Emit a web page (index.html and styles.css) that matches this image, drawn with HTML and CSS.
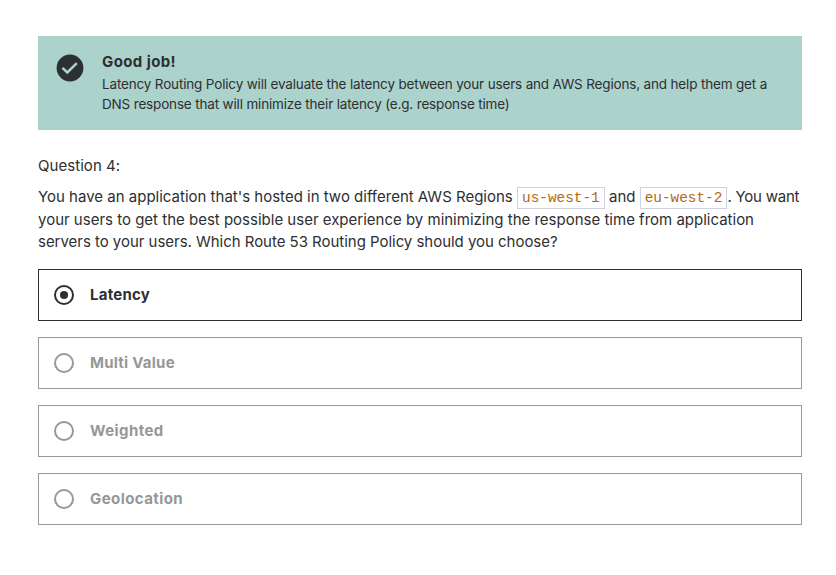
FILE: index.html
```html
<!DOCTYPE html>
<html lang="en">
<head>
<meta charset="utf-8">
<title>Quiz</title>
<link rel="stylesheet" href="styles.css">
</head>
<body>
<main class="quiz">
  <section class="alert">
    <svg class="alert-icon" viewBox="0 0 28 28"><circle cx="14" cy="14" r="13.4" fill="#2d2f31"/><path d="M6.5 13.8l4.8 4.7 9.5-9.3" fill="none" stroke="#acd2cc" stroke-width="2.5"/></svg>
    <div class="alert-body">
      <h2>Good job!</h2>
      <p>Latency Routing Policy will evaluate the latency between your users and AWS Regions, and help them get a<br>DNS response that will minimize their latency (e.g. response time)</p>
    </div>
  </section>
  <p class="number">Question 4:</p>
  <p class="question">You have an application that's hosted in two different AWS Regions <code>us-west-1</code> and <code>eu-west-2</code><span class="tail">. You want</span><br>your users to get the best possible user experience by minimizing the response time from application<br><span class="last">servers to your users. Which Route 53 Routing Policy should you choose?</span></p>
  <ul class="answers">
    <li class="answer selected"><i class="radio"></i><span class="label">Latency</span></li>
    <li class="answer"><i class="radio"></i><span class="label">Multi Value</span></li>
    <li class="answer"><i class="radio"></i><span class="label wide">Weighted</span></li>
    <li class="answer"><i class="radio"></i><span class="label wide">Geolocation</span></li>
  </ul>
</main>
</body>
</html>
```
FILE: styles.css
```css
* { box-sizing: border-box; }
body { margin: 0; background: #fff; color: #2d2f31; font-family: Inter, "Liberation Sans", sans-serif; }
h2, p, ul { margin: 0; padding: 0; }
.quiz { padding: 36px 34px 0 38px; }
.alert { display: flex; height: 94px; background: #acd2cc; padding: 16px 18px; }
.alert-icon { width: 28px; height: 28px; margin: 2px 18px 0 0; flex: none; }
.alert h2 { font-size: 15px; line-height: 20px; font-weight: 700; letter-spacing: .4px; }
.alert p { font-size: 13.5px; line-height: 20px; margin-top: 2px; white-space: nowrap; letter-spacing: -.165px; }
.number { margin-top: 25px; font-size: 15px; line-height: 22px; letter-spacing: .05px; }
.question { margin-top: 9px; font-size: 15px; line-height: 22.6px; white-space: nowrap; }
.tail { letter-spacing: -.22px; }
.last { letter-spacing: -.03px; }
code { font: 14.4px/18px "Liberation Mono", monospace; color: #b4690e; border: 1px solid #d1d2e0; padding: 2px 4px; }
.answers { list-style: none; margin-top: 15.2px; display: grid; gap: 16px; }
.answer { height: 52px; border: 1px solid #989a9c; display: flex; align-items: center; padding-left: 15px; gap: 16px; color: #969798; font-size: 15px; font-weight: 700; }
.label { letter-spacing: .25px; line-height: 20px; }
.wide { letter-spacing: .42px; }
.selected { border-color: #2d2f31; color: #2d2f31; }
.radio { width: 20px; height: 20px; border: 2px solid currentColor; border-radius: 50%; display: grid; place-items: center; }
.selected .radio::after { content: ""; width: 8px; height: 8px; border-radius: 50%; background: currentColor; }
```
